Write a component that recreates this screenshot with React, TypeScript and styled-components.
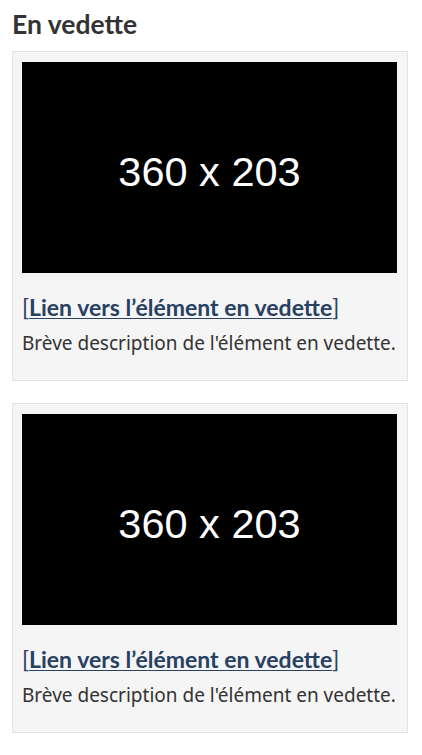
import React from 'react';
import styled, {createGlobalStyle} from "styled-components";

const GlobalStyle = createGlobalStyle`
  * {
    box-sizing: border-box;
  }
  body {
    margin: 0;
    background: #fff;
    font-family: "Noto Sans", sans-serif;
    color: #333;
  }
`

type FeatureType = {
    id: number;
    title: string;
    description: string;
}

const features: FeatureType[] = [
    {id: 1, title: "Lien vers l’élément en vedette", description: "Brève description de l'élément en vedette."},
    {id: 2, title: "Lien vers l’élément en vedette", description: "Brève description de l'élément en vedette."},
];

const Card = (props: { title: string; description: string }) => {
    return (
        <StyledCard>
            <Placeholder>360 x 203</Placeholder>
            <CardBody>
                <CardTitle>
                    <Bracket>[</Bracket><Link href="#">{props.title}</Link><Bracket>]</Bracket>
                </CardTitle>
                <Description>{props.description}</Description>
            </CardBody>
        </StyledCard>
    );
};

export default function App() {
    return (
        <Section>
            <GlobalStyle/>
            <Heading>En vedette</Heading>
            <CardList>
                {features.map(f => <Card key={f.id} title={f.title} description={f.description}/>)}
            </CardList>
        </Section>
    );
}

const Section = styled.section`
  padding: 0 14px 0 12px;
`

const Heading = styled.h2`
  margin: 0;
  padding-top: 8px;
  height: 51px;
  font-family: Lato, sans-serif;
  font-weight: 700;
  font-size: 26.5px;
  line-height: 32px;
  color: #333;
`

const CardList = styled.div`
  display: flex;
  flex-direction: column;
  gap: 22px;
`

const StyledCard = styled.div`
  width: 396px;
  height: 330px;
  background: #f5f5f5;
  border: 1px solid #e3e3e3;
  padding: 10px 10px 0 9px;
`

const Placeholder = styled.div`
  width: 375px;
  height: 211px;
  background: #000;
  color: #fff;
  display: flex;
  align-items: center;
  justify-content: center;
  padding-top: 8px;
  font-family: "Liberation Sans", Arial, sans-serif;
  font-size: 41.5px;
`

const CardBody = styled.div`
  padding-top: 19px;
`

const CardTitle = styled.h3`
  margin: 0;
  font-family: Lato, sans-serif;
  font-size: 23px;
  line-height: 30px;
  font-weight: 400;
  color: #284162;
`

const Bracket = styled.span`
  font-weight: 400;
`

const Link = styled.a`
  color: #284162;
  font-weight: 700;
  text-decoration: underline;
  text-decoration-thickness: 1px;
  text-underline-offset: 2px;
`

const Description = styled.p`
  margin: 7px 0 0;
  font-size: 19px;
  line-height: 28px;
  color: #333;
`
